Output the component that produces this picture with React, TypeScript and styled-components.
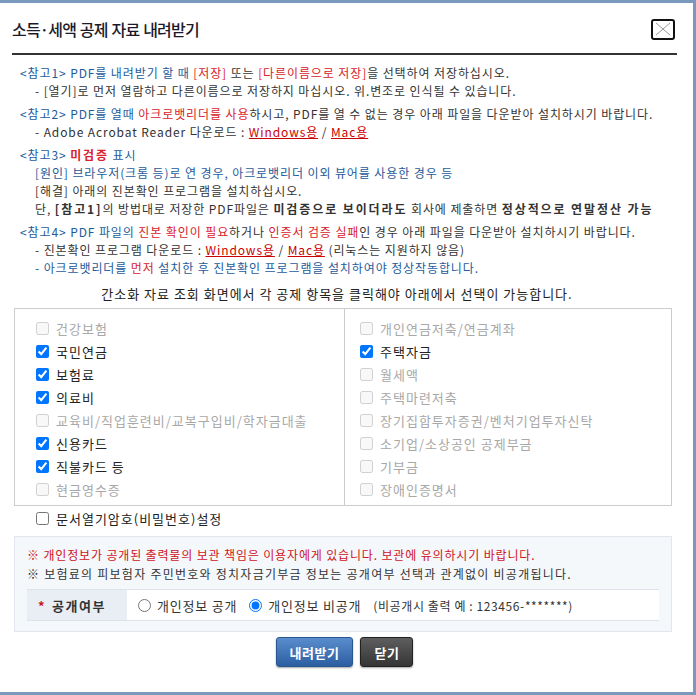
import styled, { createGlobalStyle } from "styled-components";

const GlobalStyle = createGlobalStyle`
  html, body {
    margin: 0;
    padding: 0;
    background: #fff;
  }
  body {
    font-family: "Noto Sans CJK KR", "Noto Sans", sans-serif;
    color: #333;
  }
  * {
    box-sizing: border-box;
  }
`;

const StyledWindow = styled.div`
  width: 696px;
  height: 695px;
  border: 3px solid #7b98bd;
  border-left: none;
  background: #fff;
  padding: 0 16px 0 12px;
  display: flex;
  flex-direction: column;
`;

const StyledHeader = styled.div`
  height: 52px;
  padding-top: 2px;
  display: flex;
  align-items: center;
  justify-content: space-between;
  border-bottom: 2px solid #333;
`;

const StyledTitle = styled.h2`
  margin: 0;
  font-size: 16px;
  font-weight: 500;
  letter-spacing: -0.8px;
  word-spacing: 1px;
  color: #1c1a2a;
`;

const StyledClose = styled.button`
  width: 24px;
  height: 21px;
  margin-right: 2px;
  padding: 0;
  border: 2px solid #111;
  border-radius: 3px;
  background: #fff;
  display: flex;
  align-items: center;
  justify-content: center;
`;

const StyledNotes = styled.div`
  margin-top: 9px;
  padding-left: 8px;
  font-size: 12px;
  line-height: 18px;
  letter-spacing: 0.9px;
`;

const StyledGroup = styled.div`
  & + & {
    margin-top: 5px;
  }
`;

const StyledLine = styled.div<{ $indent?: boolean }>`
  padding-left: ${(p) => (p.$indent ? "15px" : "0")};
  white-space: nowrap;
  color: #333;
`;

const toneColors = {
  blue: "#1d5b9b",
  red: "#d9212b",
  dark: "#333",
};

const Tx = styled.span<{ $tone?: keyof typeof toneColors; $bold?: boolean }>`
  color: ${(p) => toneColors[p.$tone || "dark"]};
  font-weight: ${(p) => (p.$bold ? 700 : 400)};
  letter-spacing: ${(p) => (p.$bold ? "1.9px" : "inherit")};
`;

const StyledLink = styled.a`
  color: #c00;
  text-decoration: underline;
`;

const StyledGuide = styled.p`
  margin: 8px 0 5px;
  padding-right: 15px;
  text-align: center;
  font-size: 13px;
  line-height: 18px;
  letter-spacing: 1px;
  color: #222;
`;

const StyledCheckBox = styled.div`
  margin: 0 5px 0 2px;
  border: 1px solid #ccc;
  display: grid;
  grid-template-columns: 330px 1fr;
`;

const StyledColumn = styled.ul<{ $first?: boolean }>`
  list-style: none;
  margin: 0;
  padding: 8px 0 4px ${(p) => (p.$first ? "21px" : "15px")};
  border-right: ${(p) => (p.$first ? "1px solid #ccc" : "none")};
`;

const StyledItem = styled.li<{ $disabled?: boolean }>`
  height: 23px;
  display: flex;
  align-items: center;
  gap: 7px;
  font-size: 13px;
  letter-spacing: 1px;
  color: ${(p) => (p.$disabled ? "#a8a8a8" : "#222")};

  input {
    margin: 0;
    width: 13px;
    height: 13px;
  }
`;

const StyledPassword = styled.label`
  height: 23px;
  margin-top: 1px;
  padding-left: 24px;
  display: flex;
  align-items: center;
  gap: 7px;
  font-size: 13px;
  letter-spacing: 1px;
  color: #222;

  input {
    margin: 0;
    width: 13px;
    height: 13px;
  }
`;

const StyledInfo = styled.div`
  margin: 6px 5px 0 2px;
  padding: 8px 12px 10px;
  background: #f5f8fb;
  border: 1px solid #e2e7ee;
  font-size: 12px;
  line-height: 19px;
`;

const StyledInfoLine = styled.div<{ $red?: boolean }>`
  color: ${(p) => (p.$red ? "#d0121c" : "#333")};
  letter-spacing: ${(p) => (p.$red ? "0.85px" : "1.25px")};
  white-space: nowrap;
`;

const StyledRow = styled.div`
  margin-top: 6px;
  height: 32px;
  display: grid;
  grid-template-columns: 100px 1fr;
  border-top: 1px solid #dde3ea;
  border-bottom: 1px solid #dde3ea;
  background: #fff;
`;

const StyledLabelCell = styled.div`
  background: #e9eef4;
  display: flex;
  align-items: center;
  padding-left: 11px;
  font-size: 13px;
  font-weight: 700;
  letter-spacing: 1.5px;
  color: #333;
`;

const StyledStar = styled.span`
  color: #d0121c;
  margin-right: 6px;
`;

const StyledValueCell = styled.div`
  display: flex;
  align-items: center;
  padding-left: 11px;
  font-size: 12px;
  color: #333;
`;

const StyledRadio = styled.label`
  display: flex;
  align-items: center;
  gap: 6px;
  margin-right: 12px;
  font-size: 13px;
  letter-spacing: 0.8px;

  input {
    margin: 0;
    width: 13px;
    height: 13px;
  }
`;

const StyledExample = styled.span`
  font-size: 12px;
  letter-spacing: 0.6px;
  color: #333;
`;

const StyledButtons = styled.div`
  margin-top: 5px;
  display: flex;
  justify-content: center;
  gap: 7px;
`;

const StyledButton = styled.button<{ $variant: "primary" | "dark" }>`
  height: 30px;
  padding: 0 13px;
  border-radius: 3px;
  font-family: inherit;
  font-size: 13px;
  font-weight: 700;
  letter-spacing: 0.5px;
  color: #fff;
  cursor: pointer;
  border: 1px solid ${(p) => (p.$variant === "primary" ? "#2a568f" : "#222")};
  background: ${(p) =>
    p.$variant === "primary"
      ? "linear-gradient(#5a8dcc, #2c5ea2)"
      : "linear-gradient(#5e5e5e, #353535)"};
  box-shadow: 0 1px 2px rgba(0, 0, 0, 0.35);
`;

const leftItems = [
  { label: "건강보험", checked: false },
  { label: "국민연금", checked: true },
  { label: "보험료", checked: true },
  { label: "의료비", checked: true },
  { label: "교육비/직업훈련비/교복구입비/학자금대출", checked: false },
  { label: "신용카드", checked: true },
  { label: "직불카드 등", checked: true },
  { label: "현금영수증", checked: false },
];

const rightItems = [
  { label: "개인연금저축/연금계좌", checked: false },
  { label: "주택자금", checked: true },
  { label: "월세액", checked: false },
  { label: "주택마련저축", checked: false },
  { label: "장기집합투자증권/벤처기업투자신탁", checked: false },
  { label: "소기업/소상공인 공제부금", checked: false },
  { label: "기부금", checked: false },
  { label: "장애인증명서", checked: false },
];

const CheckColumn = ({ items, first }: { items: typeof leftItems; first?: boolean }) => (
  <StyledColumn $first={first}>
    {items.map((item) => (
      <StyledItem key={item.label} $disabled={!item.checked}>
        <input type="checkbox" defaultChecked={item.checked} disabled={!item.checked} />
        {item.label}
      </StyledItem>
    ))}
  </StyledColumn>
);

export default function App() {
  return (
    <>
      <GlobalStyle />
      <StyledWindow>
        <StyledHeader>
          <StyledTitle>소득·세액 공제 자료 내려받기</StyledTitle>
          <StyledClose aria-label="닫기">
            <svg width="16" height="14" viewBox="0 0 16 14">
              <path d="M1 1 L15 13 M15 1 L1 13" stroke="#999" strokeWidth="1" fill="none" />
            </svg>
          </StyledClose>
        </StyledHeader>

        <StyledNotes>
          <StyledGroup>
            <StyledLine>
              <Tx $tone="blue">&lt;참고1&gt; PDF를 내려받기 할 때 </Tx>
              <Tx $tone="red">[저장]</Tx> 또는 <Tx $tone="red">[다른이름으로 저장]</Tx>을 선택하여 저장하십시오.
            </StyledLine>
            <StyledLine $indent>- [열기]로 먼저 열람하고 다른이름으로 저장하지 마십시오. 위.변조로 인식될 수 있습니다.</StyledLine>
          </StyledGroup>
          <StyledGroup>
            <StyledLine>
              <Tx $tone="blue">&lt;참고2&gt; PDF를 열때 </Tx>
              <Tx $tone="red">아크로뱃리더를 사용</Tx>하시고, PDF를 열 수 없는 경우 아래 파일을 다운받아 설치하시기 바랍니다.
            </StyledLine>
            <StyledLine $indent>
              - Adobe Acrobat Reader 다운로드 : <StyledLink>Windows용</StyledLink> / <StyledLink>Mac용</StyledLink>
            </StyledLine>
          </StyledGroup>
          <StyledGroup>
            <StyledLine>
              <Tx $tone="blue">&lt;참고3&gt; </Tx>
              <Tx $tone="red" $bold>미검증</Tx>
              <Tx $tone="blue"> 표시</Tx>
            </StyledLine>
            <StyledLine $indent>
              <Tx $tone="blue">[원인] 브라우저(크롬 등)로 연 경우, 아크로뱃리더 이외 뷰어를 사용한 경우 등</Tx>
            </StyledLine>
            <StyledLine $indent>[해결] 아래의 진본확인 프로그램을 설치하십시오.</StyledLine>
            <StyledLine $indent>
              단, <Tx $bold>[참고1]</Tx>의 방법대로 저장한 PDF파일은 <Tx $bold>미검증으로 보이더라도</Tx> 회사에 제출하면{" "}
              <Tx $bold>정상적으로 연말정산 가능</Tx>
            </StyledLine>
          </StyledGroup>
          <StyledGroup>
            <StyledLine>
              <Tx $tone="blue">&lt;참고4&gt; PDF 파일의 </Tx>
              <Tx $tone="red">진본 확인이 필요</Tx>하거나 <Tx $tone="red">인증서 검증 실패</Tx>인 경우 아래 파일을 다운받아 설치하시기 바랍니다.
            </StyledLine>
            <StyledLine $indent>
              - 진본확인 프로그램 다운로드 : <StyledLink>Windows용</StyledLink> / <StyledLink>Mac용</StyledLink> (리눅스는 지원하지 않음)
            </StyledLine>
            <StyledLine $indent>
              <Tx $tone="blue">- 아크로뱃리더를 </Tx>
              <Tx $tone="red">먼저</Tx>
              <Tx $tone="blue"> 설치한 후 진본확인 프로그램을 설치하여야 정상작동합니다.</Tx>
            </StyledLine>
          </StyledGroup>
        </StyledNotes>

        <StyledGuide>간소화 자료 조회 화면에서 각 공제 항목을 클릭해야 아래에서 선택이 가능합니다.</StyledGuide>

        <StyledCheckBox>
          <CheckColumn items={leftItems} first />
          <CheckColumn items={rightItems} />
        </StyledCheckBox>

        <StyledPassword>
          <input type="checkbox" />
          문서열기암호(비밀번호)설정
        </StyledPassword>

        <StyledInfo>
          <StyledInfoLine $red>※ 개인정보가 공개된 출력물의 보관 책임은 이용자에게 있습니다. 보관에 유의하시기 바랍니다.</StyledInfoLine>
          <StyledInfoLine>※ 보험료의 피보험자 주민번호와 정치자금기부금 정보는 공개여부 선택과 관계없이 비공개됩니다.</StyledInfoLine>
          <StyledRow>
            <StyledLabelCell>
              <StyledStar>*</StyledStar>공개여부
            </StyledLabelCell>
            <StyledValueCell>
              <StyledRadio>
                <input type="radio" name="open" />
                개인정보 공개
              </StyledRadio>
              <StyledRadio>
                <input type="radio" name="open" defaultChecked />
                개인정보 비공개
              </StyledRadio>
              <StyledExample>(비공개시 출력 예 : 123456-*******)</StyledExample>
            </StyledValueCell>
          </StyledRow>
        </StyledInfo>

        <StyledButtons>
          <StyledButton $variant="primary">내려받기</StyledButton>
          <StyledButton $variant="dark">닫기</StyledButton>
        </StyledButtons>
      </StyledWindow>
    </>
  );
}
